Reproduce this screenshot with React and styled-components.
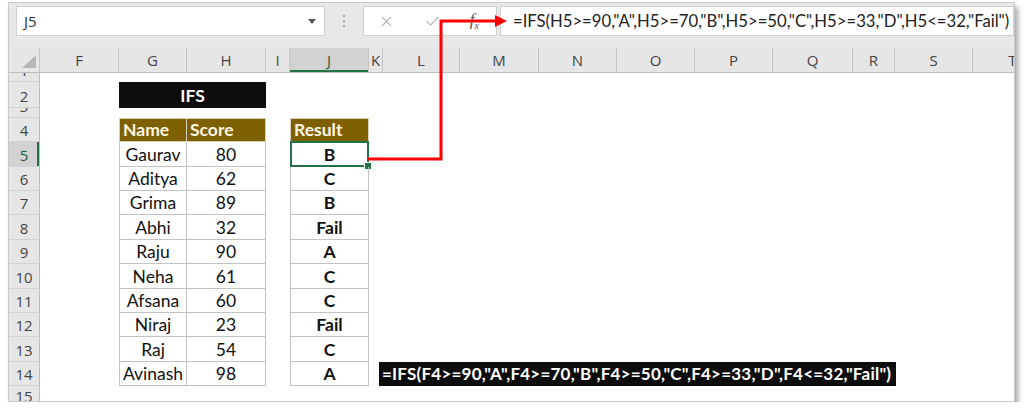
import React from "react";
import styled, { createGlobalStyle, css } from "styled-components";
import { X, Check } from "lucide-react";

const COLS = "31px 79px 68px 79px 24px 79px 14px 77px 79px 78px 78px 78px 80px 42px 78px 80px";
const LETTERS = ["F", "G", "H", "I", "J", "K", "L", "M", "N", "O", "P", "Q", "R", "S", "T"];

const students = [
  { name: "Gaurav", score: 80, result: "B" },
  { name: "Aditya", score: 62, result: "C" },
  { name: "Grima", score: 89, result: "B" },
  { name: "Abhi", score: 32, result: "Fail" },
  { name: "Raju", score: 90, result: "A" },
  { name: "Neha", score: 61, result: "C" },
  { name: "Afsana", score: 60, result: "C" },
  { name: "Niraj", score: 23, result: "Fail" },
  { name: "Raj", score: 54, result: "C" },
  { name: "Avinash", score: 98, result: "A" },
];

const GlobalStyle = createGlobalStyle`
  body {
    margin: 0;
    background: #fff;
    font-family: Lato, "Open Sans", sans-serif;
  }
`;

const Window = styled.div`
  position: relative;
  box-sizing: border-box;
  margin: 2px 0 0 8px;
  width: 1007px;
  height: 400px;
  border: 1px solid #c9c9c9;
  background: #fff;
  box-shadow: 3px 5px 5px rgba(0, 0, 0, 0.35);
  overflow: hidden;
`;

const FormulaBar = styled.div`
  display: flex;
  align-items: flex-start;
  height: 45px;
  padding: 3px 0 0 7px;
  box-sizing: border-box;
  background: #e8e8e8;
`;

const Box = styled.div`
  box-sizing: border-box;
  height: 30px;
  background: #fff;
  border: 1px solid #cfcfcf;
  display: flex;
  align-items: center;
`;

const NameBox = styled(Box)`
  width: 309px;
  padding: 0 8px 0 7px;
  justify-content: space-between;
  font-family: "Open Sans", sans-serif;
  font-size: 15px;
  color: #333;
`;

const Caret = styled.span`
  width: 0;
  height: 0;
  border-left: 4px solid transparent;
  border-right: 4px solid transparent;
  border-top: 5px solid #555;
`;

const Dots = styled.div`
  width: 38px;
  height: 30px;
  display: flex;
  flex-direction: column;
  align-items: center;
  justify-content: center;
  gap: 3px;
  span {
    width: 2px;
    height: 2px;
    background: #a5a5a5;
  }
`;

const FxBox = styled(Box)`
  width: 134px;
  padding: 0 17px 0 14px;
  justify-content: space-between;
  color: #b3b3b3;
`;

const Fx = styled.span`
  font-family: "Liberation Serif", serif;
  font-style: italic;
  font-size: 17px;
  color: #555;
  sub {
    font-size: 10px;
  }
`;

const FormulaInput = styled(Box)`
  margin-left: 3px;
  width: 514px;
  padding-left: 12px;
  font-family: Lato, sans-serif;
  font-size: 16.7px;
  color: #222;
  white-space: nowrap;
  overflow: hidden;
`;

const Row = styled.div`
  display: grid;
  grid-template-columns: ${COLS};
  height: ${(p) => p.$h}px;
`;

const HeaderRow = styled(Row)`
  background: #e6e6e6;
  border-bottom: 1px solid #bdbdbd;
  box-sizing: border-box;
`;

const Corner = styled.div`
  display: flex;
  align-items: flex-end;
  justify-content: flex-end;
  padding: 0 3px 4px 0;
  border-right: 1px solid #c4c4c4;
`;

const ColHead = styled.div`
  display: flex;
  align-items: center;
  justify-content: center;
  border-right: 1px solid #c4c4c4;
  font-family: "Open Sans", sans-serif;
  font-size: 15px;
  color: #444;
  overflow: hidden;
  ${(p) =>
    p.$active &&
    css`
      background: #d2d2d2;
      color: #1f5c3a;
      box-shadow: inset 0 -2px 0 #217346;
    `}
`;

const RowHead = styled.div`
  grid-column: 1;
  box-sizing: border-box;
  display: flex;
  align-items: ${(p) => (p.$top ? "flex-start" : "flex-end")};
  justify-content: center;
  padding-bottom: 1px;
  background: #e6e6e6;
  border-right: 1px solid #bdbdbd;
  border-bottom: 1px solid #d2d2d2;
  font-family: "Open Sans", sans-serif;
  font-size: 15px;
  line-height: 20px;
  color: #444;
  overflow: hidden;
  ${(p) =>
    p.$active &&
    css`
      background: #d2d2d2;
      color: #1f5c3a;
      box-shadow: inset -2px 0 0 #217346;
    `}
`;

const TitleCell = styled.div`
  grid-column: 3 / span 2;
  display: flex;
  align-items: center;
  justify-content: center;
  background: #0d0d0d;
  color: #fff;
  font-weight: 700;
  font-size: 17.5px;
`;

const TableCell = styled.div`
  position: relative;
  grid-column: ${(p) => p.$col};
  box-sizing: border-box;
  display: flex;
  align-items: flex-end;
  justify-content: center;
  padding-bottom: 1px;
  border-right: 1px solid #c3c3c3;
  border-bottom: 1px solid #c3c3c3;
  border-left: ${(p) => (p.$first ? "1px solid #c3c3c3" : "none")};
  font-size: 17.5px;
  font-weight: ${(p) => (p.$bold ? 700 : 400)};
  color: #111;
`;

const HeadCell = styled(TableCell)`
  justify-content: flex-start;
  padding-left: 3px;
  background: #7f6000;
  border-color: #d9d0b8;
  border-top: 1px solid #d9d0b8;
  color: #fdf6e3;
  font-weight: 700;
`;

const Selection = styled.span`
  position: absolute;
  inset: -1px -1px -1px -1px;
  border: 2px solid #217346;
  pointer-events: none;
  &::after {
    content: "";
    position: absolute;
    right: -5px;
    bottom: -5px;
    width: 6px;
    height: 6px;
    background: #217346;
    border: 1px solid #fff;
  }
`;

const NoteCell = styled.div`
  grid-column: 7 / span 10;
  display: flex;
  align-items: stretch;
  padding-left: 10px;
`;

const Note = styled.div`
  display: flex;
  align-items: center;
  padding: 0 5px 0 3px;
  background: #0d0d0d;
  color: #fff;
  font-weight: 700;
  font-size: 17px;
  letter-spacing: 0.22px;
  white-space: nowrap;
`;

const Arrow = styled.svg`
  position: absolute;
  left: 0;
  top: 0;
  pointer-events: none;
`;

export default function App() {
  return (
    <>
      <GlobalStyle />
      <Window>
        <FormulaBar>
          <NameBox>
            J5
            <Caret />
          </NameBox>
          <Dots>
            <span />
            <span />
            <span />
          </Dots>
          <FxBox>
            <X size={17} strokeWidth={1.5} />
            <Check size={17} strokeWidth={1.5} />
            <Fx>
              f<sub>x</sub>
            </Fx>
          </FxBox>
          <FormulaInput>
            =IFS(H5&gt;=90,"A",H5&gt;=70,"B",H5&gt;=50,"C",H5&gt;=33,"D",H5&lt;=32,"Fail")
          </FormulaInput>
        </FormulaBar>

        <HeaderRow $h={25}>
          <Corner>
            <svg width="14" height="13" viewBox="0 0 14 13">
              <polygon points="14,0 14,13 0,13" fill="#b8b8b8" />
            </svg>
          </Corner>
          {LETTERS.map((l) => (
            <ColHead key={l} $active={l === "J"}>
              {l}
            </ColHead>
          ))}
        </HeaderRow>

        <Row $h={9}>
          <RowHead>1</RowHead>
        </Row>
        <Row $h={26}>
          <RowHead>2</RowHead>
          <TitleCell>IFS</TitleCell>
        </Row>
        <Row $h={10}>
          <RowHead>3</RowHead>
        </Row>
        <Row $h={24.36}>
          <RowHead>4</RowHead>
          <HeadCell $col={3} $first>
            Name
          </HeadCell>
          <HeadCell $col={4}>Score</HeadCell>
          <HeadCell $col={6} $first>
            Result
          </HeadCell>
        </Row>
        {students.map((s, i) => (
          <Row key={s.name} $h={24.36}>
            <RowHead $active={i === 0}>{i + 5}</RowHead>
            <TableCell $col={3} $first>
              {s.name}
            </TableCell>
            <TableCell $col={4}>{s.score}</TableCell>
            <TableCell $col={6} $first $bold>
              {s.result}
              {i === 0 && <Selection />}
            </TableCell>
            {i === students.length - 1 && (
              <NoteCell>
                <Note>
                  =IFS(F4&gt;=90,"A",F4&gt;=70,"B",F4&gt;=50,"C",F4&gt;=33,"D",F4&lt;=32,"Fail")
                </Note>
              </NoteCell>
            )}
          </Row>
        ))}
        <Row $h={20}>
          <RowHead $top>15</RowHead>
        </Row>

        <Arrow width="1005" height="398">
          <polyline
            points="358,156 432,156 432,18 488,18"
            fill="none"
            stroke="#f00"
            strokeWidth="3"
          />
          <polygon points="486,12 498,18 486,24" fill="#f00" />
        </Arrow>
      </Window>
    </>
  );
}
